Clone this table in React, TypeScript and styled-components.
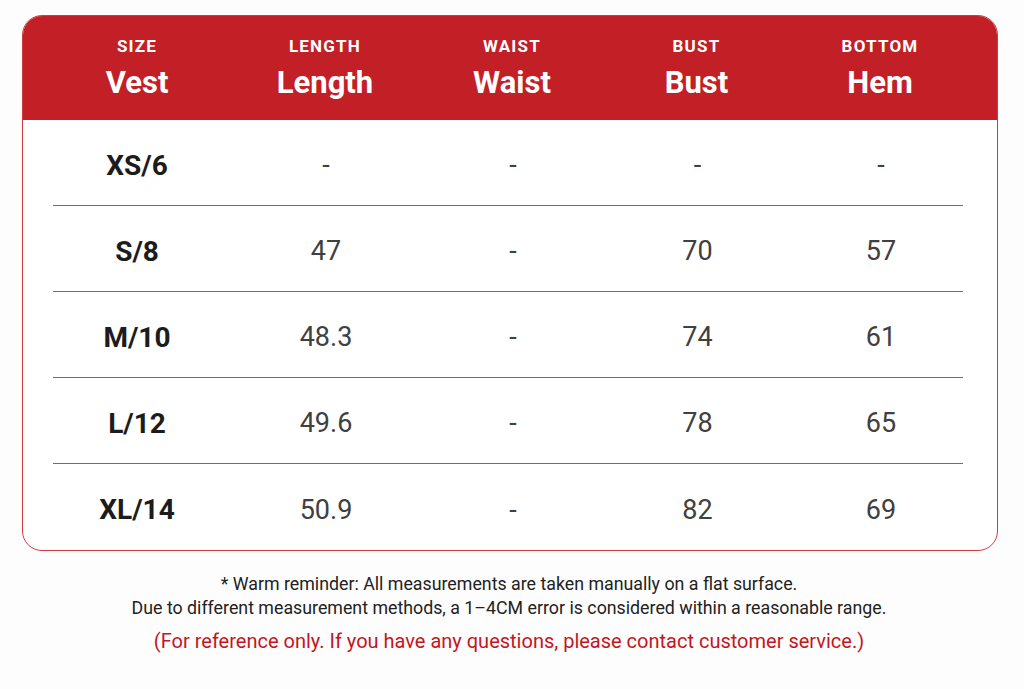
import React from "react";
import styled, { createGlobalStyle } from "styled-components";

const Global = createGlobalStyle`
  html, body { margin: 0; padding: 0; background: #fdfdfd; }
  body { font-family: Roboto, "Liberation Sans", sans-serif; width: 1024px; height: 689px; overflow: hidden; }
`;

const Page = styled.div`
  padding: 15px 26px 0 22px;
  display: flex;
  flex-direction: column;
`;

const Card = styled.div`
  border: 1px solid #d23a40;
  border-radius: 20px;
  overflow: hidden;
  background: #fff;
  display: flex;
  flex-direction: column;
`;

const Header = styled.div`
  flex-shrink: 0;
  background: #c21f27;
  height: 105px;
  display: grid;
  grid-template-columns: 188px 188px 186px 183px 184px;
  padding-left: 21px;
  align-items: center;
  margin: -1px -1px 0 -1px;
`;

const HeadCell = styled.div`
  display: flex;
  flex-direction: column;
  align-items: center;
  color: #fff;
  padding-top: 2px;
`;

const Caps = styled.div`
  font-size: 17px;
  font-weight: 700;
  letter-spacing: 1.2px;
  line-height: 20px;
`;

const Big = styled.div`
  font-size: 31px;
  font-weight: 700;
  line-height: 36px;
  margin-top: 9px;
`;

const Body = styled.div`
  margin: 0 34px 0 30px;
  display: flex;
  flex-direction: column;
`;

const Row = styled.div<{ $last?: boolean }>`
  flex-shrink: 0;
  height: 86px;
  box-sizing: border-box;
  display: grid;
  grid-template-columns: 179px 188px 186px 183px 184px;
  align-items: center;
  border-bottom: ${(p) => (p.$last ? "none" : "1px solid #dc3c42")};
`;

const SizeCell = styled.div`
  text-align: center;
  font-size: 28px;
  font-weight: 700;
  color: #1c1c1c;
  padding: 5px 11px 0 0;
`;

const ValCell = styled.div`
  text-align: center;
  font-size: 27px;
  font-weight: 400;
  color: #404040;
  padding-top: 5px;
`;

const Notes = styled.div`
  display: flex;
  flex-direction: column;
  align-items: center;
  margin-top: 21px;
  margin-right: 2px;
`;

const Note = styled.div`
  font-size: 17.8px;
  color: #222;
  line-height: 24px;
`;

const RedNote = styled.div`
  font-size: 20px;
  color: #c4161c;
  line-height: 26px;
  margin-top: 8px;
`;

const headers = [
  ["SIZE", "Vest"],
  ["LENGTH", "Length"],
  ["WAIST", "Waist"],
  ["BUST", "Bust"],
  ["BOTTOM", "Hem"],
];

const rows = [
  ["XS/6", "-", "-", "-", "-"],
  ["S/8", "47", "-", "70", "57"],
  ["M/10", "48.3", "-", "74", "61"],
  ["L/12", "49.6", "-", "78", "65"],
  ["XL/14", "50.9", "-", "82", "69"],
];

export default function App() {
  return (
    <>
      <Global />
      <Page>
        <Card>
          <Header>
            {headers.map(([c, b]) => (
              <HeadCell key={c}>
                <Caps>{c}</Caps>
                <Big>{b}</Big>
              </HeadCell>
            ))}
          </Header>
          <Body>
            {rows.map((r, i) => (
              <Row key={r[0]} $last={i === rows.length - 1}>
                <SizeCell>{r[0]}</SizeCell>
                {r.slice(1).map((v, j) => (
                  <ValCell key={j}>{v}</ValCell>
                ))}
              </Row>
            ))}
          </Body>
        </Card>
        <Notes>
          <Note>* Warm reminder: All measurements are taken manually on a flat surface.</Note>
          <Note>Due to different measurement methods, a 1–4CM error is considered within a reasonable range.</Note>
          <RedNote>(For reference only. If you have any questions, please contact customer service.)</RedNote>
        </Notes>
      </Page>
    </>
  );
}
